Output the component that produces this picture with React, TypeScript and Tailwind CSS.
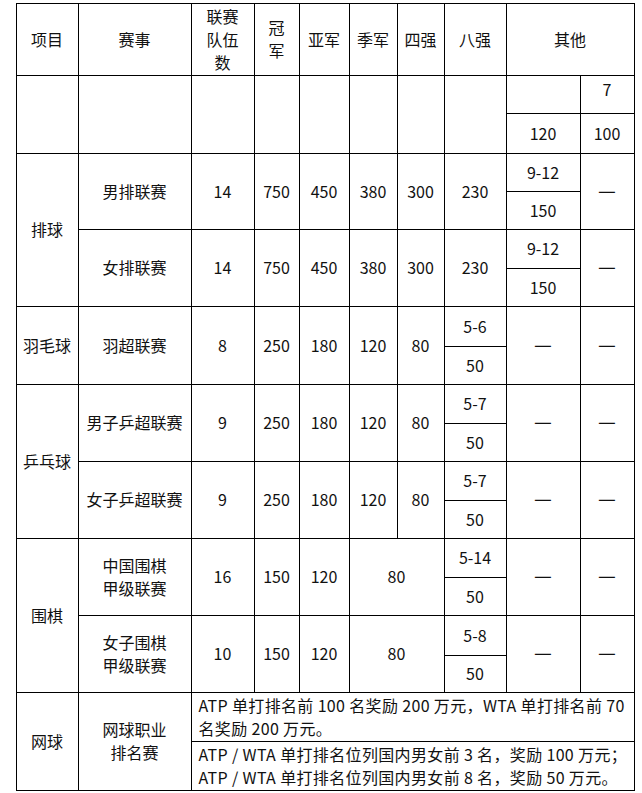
const cell = "border border-black text-center align-middle p-0";

function Dash() {
  return <span className="inline-block text-[20px] leading-none">—</span>;
}

export default function App() {
  return (
    <div
      className="w-[642px] h-[793px] bg-white pl-[15.5px] pt-[2.5px] text-[16px] leading-[23px] text-[#111]"
      style={{ fontFamily: '"Noto Sans CJK SC", "Noto Sans", sans-serif' }}
    >
      <table className="table-fixed border-collapse w-[619px]">
        <colgroup>
          <col className="w-[62px]" />
          <col className="w-[113px]" />
          <col className="w-[63px]" />
          <col className="w-[45px]" />
          <col className="w-[50px]" />
          <col className="w-[48px]" />
          <col className="w-[47px]" />
          <col className="w-[62px]" />
          <col className="w-[74px]" />
          <col className="w-[54px]" />
        </colgroup>
        <tbody>
          {/* header */}
          <tr className="h-[72px]">
            <td className={cell}>项目</td>
            <td className={cell}>赛事</td>
            <td className={cell}>
              联赛
              <br />
              队伍
              <br />
              数
            </td>
            <td className={cell}>
              冠
              <br />
              军
            </td>
            <td className={cell}>亚军</td>
            <td className={cell}>季军</td>
            <td className={cell}>四强</td>
            <td className={cell}>八强</td>
            <td className={cell} colSpan={2}>
              其他
            </td>
          </tr>

          {/* empty row */}
          <tr className="h-[38px]">
            <td className={cell} rowSpan={2}></td>
            <td className={cell} rowSpan={2}></td>
            <td className={cell} rowSpan={2}></td>
            <td className={cell} rowSpan={2}></td>
            <td className={cell} rowSpan={2}></td>
            <td className={cell} rowSpan={2}></td>
            <td className={cell} rowSpan={2}></td>
            <td className={cell} rowSpan={2}></td>
            <td className={cell}></td>
            <td className={`${cell} align-top pt-[2px]`}>7</td>
          </tr>
          <tr className="h-[40px]">
            <td className={cell}>120</td>
            <td className={cell}>100</td>
          </tr>

          {/* 排球 */}
          <tr className="h-[38px]">
            <td className={cell} rowSpan={4}>排球</td>
            <td className={cell} rowSpan={2}>男排联赛</td>
            <td className={cell} rowSpan={2}>14</td>
            <td className={cell} rowSpan={2}>750</td>
            <td className={cell} rowSpan={2}>450</td>
            <td className={cell} rowSpan={2}>380</td>
            <td className={cell} rowSpan={2}>300</td>
            <td className={cell} rowSpan={2}>230</td>
            <td className={cell}>9-12</td>
            <td className={cell} rowSpan={2}>
              <Dash />
            </td>
          </tr>
          <tr className="h-[38px]">
            <td className={cell}>150</td>
          </tr>
          <tr className="h-[39px]">
            <td className={cell} rowSpan={2}>女排联赛</td>
            <td className={cell} rowSpan={2}>14</td>
            <td className={cell} rowSpan={2}>750</td>
            <td className={cell} rowSpan={2}>450</td>
            <td className={cell} rowSpan={2}>380</td>
            <td className={cell} rowSpan={2}>300</td>
            <td className={cell} rowSpan={2}>230</td>
            <td className={cell}>9-12</td>
            <td className={cell} rowSpan={2}>
              <Dash />
            </td>
          </tr>
          <tr className="h-[38px]">
            <td className={cell}>150</td>
          </tr>

          {/* 羽毛球 */}
          <tr className="h-[40px]">
            <td className={cell} rowSpan={2}>羽毛球</td>
            <td className={cell} rowSpan={2}>羽超联赛</td>
            <td className={cell} rowSpan={2}>8</td>
            <td className={cell} rowSpan={2}>250</td>
            <td className={cell} rowSpan={2}>180</td>
            <td className={cell} rowSpan={2}>120</td>
            <td className={cell} rowSpan={2}>80</td>
            <td className={cell}>5-6</td>
            <td className={cell} rowSpan={2}>
              <Dash />
            </td>
            <td className={cell} rowSpan={2}>
              <Dash />
            </td>
          </tr>
          <tr className="h-[38px]">
            <td className={cell}>50</td>
          </tr>

          {/* 乒乓球 */}
          <tr className="h-[39px]">
            <td className={cell} rowSpan={4}>乒乓球</td>
            <td className={cell} rowSpan={2}>男子乒超联赛</td>
            <td className={cell} rowSpan={2}>9</td>
            <td className={cell} rowSpan={2}>250</td>
            <td className={cell} rowSpan={2}>180</td>
            <td className={cell} rowSpan={2}>120</td>
            <td className={cell} rowSpan={2}>80</td>
            <td className={cell}>5-7</td>
            <td className={cell} rowSpan={2}>
              <Dash />
            </td>
            <td className={cell} rowSpan={2}>
              <Dash />
            </td>
          </tr>
          <tr className="h-[38px]">
            <td className={cell}>50</td>
          </tr>
          <tr className="h-[39px]">
            <td className={cell} rowSpan={2}>女子乒超联赛</td>
            <td className={cell} rowSpan={2}>9</td>
            <td className={cell} rowSpan={2}>250</td>
            <td className={cell} rowSpan={2}>180</td>
            <td className={cell} rowSpan={2}>120</td>
            <td className={cell} rowSpan={2}>80</td>
            <td className={cell}>5-7</td>
            <td className={cell} rowSpan={2}>
              <Dash />
            </td>
            <td className={cell} rowSpan={2}>
              <Dash />
            </td>
          </tr>
          <tr className="h-[38px]">
            <td className={cell}>50</td>
          </tr>

          {/* 围棋 */}
          <tr className="h-[39px]">
            <td className={cell} rowSpan={4}>围棋</td>
            <td className={cell} rowSpan={2}>
              中国围棋
              <br />
              甲级联赛
            </td>
            <td className={cell} rowSpan={2}>16</td>
            <td className={cell} rowSpan={2}>150</td>
            <td className={cell} rowSpan={2}>120</td>
            <td className={cell} rowSpan={2} colSpan={2}>
              80
            </td>
            <td className={cell}>5-14</td>
            <td className={cell} rowSpan={2}>
              <Dash />
            </td>
            <td className={cell} rowSpan={2}>
              <Dash />
            </td>
          </tr>
          <tr className="h-[38px]">
            <td className={cell}>50</td>
          </tr>
          <tr className="h-[40px]">
            <td className={cell} rowSpan={2}>
              女子围棋
              <br />
              甲级联赛
            </td>
            <td className={cell} rowSpan={2}>10</td>
            <td className={cell} rowSpan={2}>150</td>
            <td className={cell} rowSpan={2}>120</td>
            <td className={cell} rowSpan={2} colSpan={2}>
              80
            </td>
            <td className={cell}>5-8</td>
            <td className={cell} rowSpan={2}>
              <Dash />
            </td>
            <td className={cell} rowSpan={2}>
              <Dash />
            </td>
          </tr>
          <tr className="h-[37px]">
            <td className={cell}>50</td>
          </tr>

          {/* 网球 */}
          <tr className="h-[49px]">
            <td className={cell} rowSpan={2}>网球</td>
            <td className={cell} rowSpan={2}>
              网球职业
              <br />
              排名赛
            </td>
            <td
              className={`${cell} text-left pl-[7px] whitespace-nowrap tracking-[0.35px]`}
              colSpan={8}
            >
              ATP 单打排名前 100 名奖励 200 万元，WTA 单打排名前 70
              <br />
              名奖励 200 万元。
            </td>
          </tr>
          <tr className="h-[49px]">
            <td
              className={`${cell} text-left pl-[7px] whitespace-nowrap tracking-[0.35px]`}
              colSpan={8}
            >
              ATP / WTA 单打排名位列国内男女前 3 名，奖励 100 万元；
              <br />
              ATP / WTA 单打排名位列国内男女前 8 名，奖励 50 万元。
            </td>
          </tr>
        </tbody>
      </table>
    </div>
  );
}
